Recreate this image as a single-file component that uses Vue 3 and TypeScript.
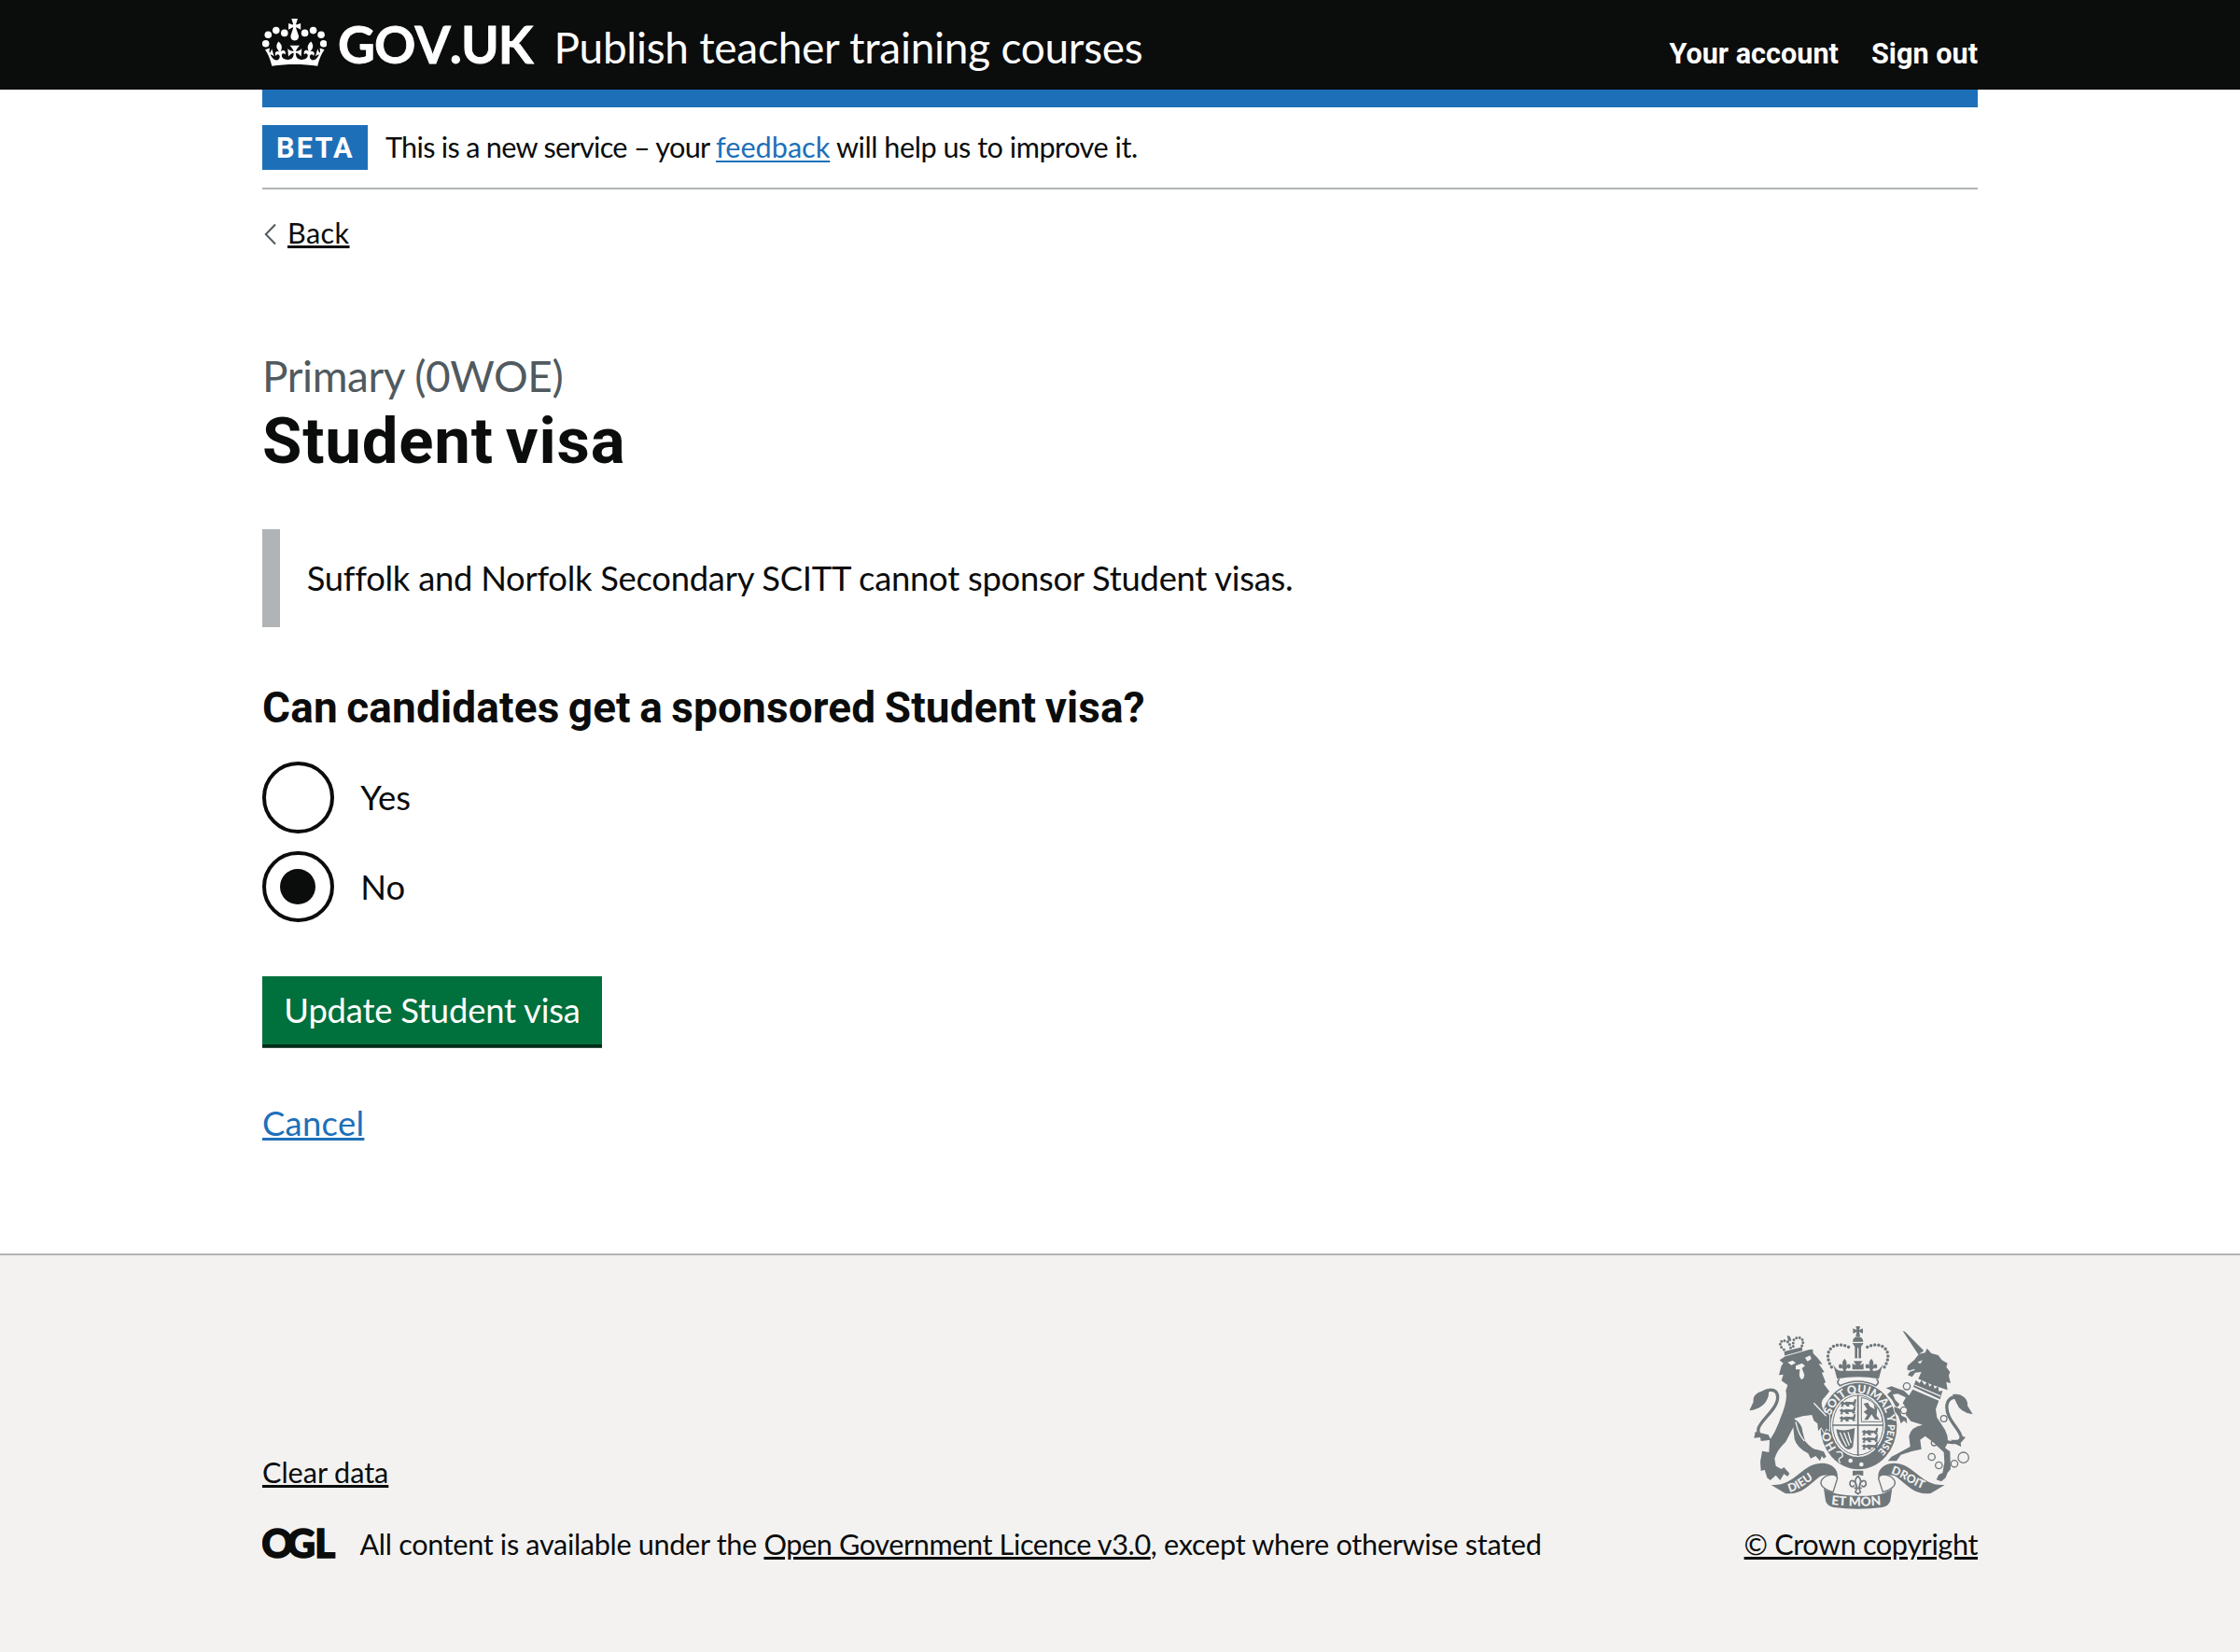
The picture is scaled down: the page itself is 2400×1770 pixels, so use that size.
<script setup lang="ts">
import { ref } from 'vue'

interface Option {
  value: string
  label: string
}

const options: Option[] = [
  { value: 'yes', label: 'Yes' },
  { value: 'no', label: 'No' },
]
const selected = ref('no')

const crownPearls: [number, number][] = [
  [3.7, 26.7], [6.3, 17.3], [14.8, 12.6], [23.8, 15.4],
  [45.6, 15.4], [54.6, 12.6], [63.1, 17.3], [65.7, 26.7],
]

const chainLinks: [number, number, number][] = [
  [549, 226, 11], [540, 303, 11], [668, 330, 10], [660, 373, 9], [637, 408, 9],
  [629, 453, 11], [652, 480, 11], [702, 475, 11], [731, 455, 17],
]

const lionRows: [number, number][] = [
  [332, 272], [330, 296], [330, 320], [402, 364], [402, 387], [402, 410],
]
</script>

<template>
  <div class="page">
    <header class="header">
      <div class="container header-row">
        <svg class="crown" viewBox="0 0 69.4 51" aria-hidden="true">
          <circle v-for="[cx, cy] in crownPearls" :key="cx" :cx="cx" :cy="cy" r="3.8" />
          <path d="M36.1 9.8c.2-.1.3-.3.5-.5l4.6 2.4v-6.8l-4.6 1.5c-.1-.2-.3-.3-.5-.5l1.9-5.9h-6.7l1.9 5.9c-.2.1-.3.3-.5.5l-4.6-1.5v6.8l4.6-2.4c.1.2.3.3.5.5l-2.6 8c-.9 2.8 1.2 5.7 4.1 5.7 3 0 5.1-2.9 4.1-5.7z" />
          <path transform="translate(3 -9.2)" d="M37 37.9s-3.4 3.8-4.1 6.1c2.2 0 4.2-.5 6.4-2.8l-.7 8.5c-2-2.8-4.4-4.1-5.7-3.8.1 3.1.5 6.7 5.8 7.2 3.7.3 6.7-1.5 7-3.8.4-2.6-2-4.3-3.7-1.6-1.4-4.5 2.4-6.1 4.9-3.2-1.9-4.5-1.8-7.7 2.4-10.9 3 4 2.6 7.3-1.2 11.1 2.4-1.3 6.2 0 4 4.6-1.2-2.8-3.7-2.2-4.2.2-.3 1.7.7 3.7 3 4.2 1.9.3 4.7-.9 7-5.9-1.3 0-2.4.7-3.9 1.7l2.4-8c.6 2.3 1.4 3.7 2.2 4.5.6-1.6.5-2.8 0-5.3l5 1.8c-2.6 3.6-5.2 8.7-7.3 17.5-7.4-1.1-15.7-1.7-24.5-1.7-8.8 0-17.1.6-24.5 1.7-2.1-8.9-4.7-13.9-7.3-17.5l5-1.8c-.5 2.5-.6 3.7 0 5.3.8-.8 1.6-2.3 2.2-4.5l2.4 8c-1.5-1-2.6-1.7-3.9-1.7 2.3 5 5.2 6.2 7 5.9 2.3-.4 3.3-2.4 3-4.2-.5-2.4-3-3.1-4.2-.2-2.2-4.6 1.6-6 4-4.6-3.7-3.7-4.2-7.1-1.2-11.1 4.2 3.2 4.3 6.4 2.4 10.9 2.5-2.8 6.3-1.3 4.9 3.2-1.8-2.7-4.1-1-3.7 1.6.3 2.3 3.3 4.1 7 3.8 5.4-.5 5.7-4.2 5.8-7.2-1.3-.2-3.7 1-5.7 3.8l-.7-8.5c2.2 2.3 4.2 2.7 6.4 2.8-.7-2.3-4.1-6.1-4.1-6.1z" />
        </svg>
        <span class="govuk">GOV.UK</span>
        <span class="service">Publish teacher training courses</span>
        <nav class="nav">
          <a>Your account</a>
          <a>Sign out</a>
        </nav>
      </div>
    </header>

    <main class="container main">
      <div class="bar"></div>
      <div class="phase">
        <strong class="tag">BETA</strong>
        <p class="phase-text"><span class="t1">This is a new service – your </span><a class="link feedback">feedback</a><span class="t2"> will help us to improve it.</span></p>
      </div>

      <a class="back">
        <svg class="chevron" viewBox="0 0 13 24" aria-hidden="true"><path d="M12 1.5 1.8 12 12 22.5" /></svg>
        <span>Back</span>
      </a>

      <h1 class="heading">
        <span class="caption">Primary (0WOE)</span>
        <span class="title">Student visa</span>
      </h1>

      <div class="inset">Suffolk and Norfolk Secondary SCITT cannot sponsor Student visas.</div>

      <h2 class="question">Can candidates get a sponsored Student visa?</h2>
      <div class="radios">
        <label v-for="o in options" :key="o.value" class="radio" @click="selected = o.value">
          <span class="circle"><span v-if="selected === o.value" class="dot"></span></span>
          <span class="radio-label">{{ o.label }}</span>
        </label>
      </div>

      <button class="button" type="button">Update Student visa</button>
      <a class="link cancel">Cancel</a>
    </main>

    <footer class="footer">
      <div class="container footer-row">
        <div class="meta">
          <a class="flink clear">Clear data</a>
          <div class="licence">
            <svg class="ogl" viewBox="0 0 80 38" role="img" aria-label="Open Government Licence">
              <text y="32.6" x="-0.8 26.6 56.3">OGL</text>
            </svg>
            <p class="licence-text"><span class="l1">All content is available under the </span><a class="flink l2">Open Government Licence v3.0</a><span class="l3">, except where otherwise stated</span></p>
          </div>
        </div>
        <div class="copyright">
          <svg class="crest" viewBox="42 30 720 592" aria-hidden="true">
            <defs>
              <path id="garter" d="M394 460C342 460 300 414 300 354S342 248 394 248S488 294 488 354S446 460 394 460" />
              <path id="dieu" d="M172 566C215 556 238 522 280 510" />
              <path id="mon" d="M306 606Q392 616 480 606" />
              <path id="droit" d="M497 506C540 518 565 548 622 562" />
              <g id="fleur">
                <path d="M0-22C9-12 9-6 4 4C10-6 20-6 20 4C20 12 12 14 9 8C8 12 6 14 4 14L6 24H-6L-4 14C-6 14-8 12-9 8C-12 14-20 12-20 4C-20-6-10-6-4 4C-9-6-9-12 0-22Z" />
              </g>
              <g id="passant">
                <path d="M2 8L10 2L16 6L22 3L44 5C50 0 46-4 52-5C58-3 52 2 54 8L50 12L56 16L46 18L42 12L30 13L34 19L24 19L20 13L12 14L14 20L4 20L8 13Z" />
              </g>
            </defs>

            <!-- royal crown -->
            <path d="M385 33H399L396 45L408 40V56L396 51L399 66H385L388 51L376 56V40L388 45Z" />
            <path d="M375 83Q376 67 392 67Q408 67 409 83Z" />
            <path d="M374 87H410L402 99V136H382V99Z" />
            <path class="light-line" d="M392 103V136" />
            <path class="beads" d="M307 164C295 145 289 120 306 103C322 88 350 90 372 106" />
            <path class="beads" d="M477 164C489 145 495 120 478 103C462 88 434 90 412 106" />
            <use href="#fleur" transform="translate(349 158) scale(.95)" />
            <use href="#fleur" transform="translate(435 158) scale(.95)" />
            <path d="M378 145H406L398 158L410 153V172H374V153L386 158Z" />
            <path d="M312 154Q322 178 340 176H444Q462 178 472 154L459 202Q392 190 325 202Z" />
            <path class="line" d="M333 203Q320 212 334 224Q392 196 450 224Q464 212 451 203" />

            <!-- garter and shield -->
            <ellipse cx="394" cy="354" rx="123" ry="139" />
            <ellipse class="light" cx="392" cy="351" rx="87" ry="102" />
            <ellipse class="line thin" cx="392" cy="351" rx="81" ry="96" />
            <path class="line" d="M392 254V450M310 351H474" />
            <use v-for="[x, y] in lionRows" :key="`${x}-${y}`" href="#passant" :x="x" :y="y" />
            <path class="line thin" d="M403 262Q440 268 458 300T468 340H403Z" />
            <path d="M410 282L424 278L430 290L446 300L442 282L454 296L452 320L462 334L446 332L436 316L424 334L412 334L422 318L410 308L422 300Z" />
            <path d="M322 364Q350 372 382 360L376 420Q366 436 350 424Q328 400 322 364Z" />
            <path class="light-line" d="M334 374Q344 398 356 420M347 375L364 416M360 373L370 408" />
            <circle class="light" cx="368" cy="465" r="7" />
            <circle class="light" cx="403" cy="477" r="7" />
            <path class="light-line" d="M322 438Q346 432 342 452Q322 462 336 472" />

            <!-- lion -->
            <path d="M155 114L212 100L214 112L156 128ZM164 62L174 66L178 80L168 80Z" />
            <path class="beads small" d="M154 108C136 96 138 76 162 80C170 84 174 94 176 104M212 96C222 76 208 64 190 72C182 78 184 90 184 100" />
            <path class="edged" d="M140 142L158 130L236 108L247 107L248 120L262 134L278 155L266 154L284 180L276 182L288 212L282 218L300 242L286 260Q268 275 280 300L300 318V368L290 362L284 376L274 358L264 370L262 346L250 336L244 318L214 322L186 330Q212 345 214 372L222 402Q245 430 262 430L282 436L290 452L282 458L276 450L270 466L256 450L240 458L232 442Q196 424 188 396L184 358L160 404Q132 430 124 458L128 482L146 492L154 486L172 506L166 516L154 508L142 528L128 512L110 528L100 520L92 494L80 498L78 468L84 434L106 438L108 400Q130 368 142 330Q168 270 160 240L166 222L146 208L152 188L138 190L146 160L152 152Z" />
            <path class="light" d="M166 149L182 143L192 151L178 158ZM222 134L238 127L242 138L230 146ZM192 160L212 152L222 160L212 168L220 190Q216 208 208 202Q200 192 206 172L192 172Z" />
            <path class="tail" d="M108 394Q66 390 72 362C78 335 132 302 134 262Q134 236 108 238Q90 240 78 252" />
            <path d="M106 240C76 238 52 252 56 276L43 304Q92 298 104 258ZM62 372L58 392L78 390L80 402L112 398L104 382Z" />
            <path class="light-line" d="M250 280L290 322M192 340Q200 380 220 402" />

            <!-- unicorn -->
            <path d="M536 48L543 50L604 112L586 124ZM588 122L608 118L614 104L628 120L650 126L662 142L680 152L676 164L688 180L684 192L690 216L676 212L680 238L662 232L626 220L586 202L596 180L576 182L566 196L552 190L560 178L550 172L552 160L574 140Z" />
            <path class="light" d="M584 148L600 142L592 154Z" />
            <path class="light-line" d="M556 178L574 172" />
            <path d="M578 206L590 216L596 206L606 222L616 210L622 228L634 216L638 234L650 226L652 242L664 240L656 268L570 228Z" />
            <path class="light-line" d="M574 222L658 258" />
            <path class="edged" d="M568 236L652 272L642 300L646 326L672 366Q690 402 672 424L688 436L690 492L680 504L674 520L660 532L644 526L652 510L664 504L670 470L668 438L632 404L608 386L592 398L596 428Q560 434 530 446L516 466H488L500 452L516 444L560 420L556 386Q562 356 600 350L562 338L546 318L550 300L536 280L546 262L520 250L504 252L512 270L526 284L516 296L502 270L486 252L500 240L482 232L500 226L540 240L556 256Z" />
            <path class="edged" d="M508 292L526 298L532 320L548 328L550 346L540 336L530 346L522 322L510 306Z" />
            <path class="tail" d="M676 404Q716 414 724 392C724 366 672 332 678 286Q684 256 714 262" />
            <path d="M696 252C724 246 748 266 744 288L761 316Q720 310 708 278ZM738 390L722 384L716 398L690 398L706 412L724 420L722 408Z" />
            <g class="links">
              <circle v-for="[cx, cy, r] in chainLinks" :key="`${cx}-${cy}`" :cx="cx" :cy="cy" :r="r" />
            </g>
            <g class="motto">
              <text><textPath href="#garter" startOffset="13%">HO</textPath></text>
              <text><textPath href="#garter" startOffset="30.5%">SOIT</textPath></text>
              <text><textPath href="#garter" startOffset="44.5%">QUI</textPath></text>
              <text><textPath href="#garter" startOffset="55.5%">MAL</textPath></text>
              <text><textPath href="#garter" startOffset="69.4%">Y</textPath></text>
              <text class="pense"><textPath href="#garter" startOffset="74%">PENSE</textPath></text>
            </g>

            <!-- ribbon -->
            <path d="M113 543C190 548 206 480 268 474C306 470 332 494 326 522L310 548L296 532C316 508 278 506 262 522C230 548 208 576 158 570Z" />
            <path d="M671 543C594 548 578 480 516 474C478 470 452 494 458 522L474 548L488 532C468 508 506 506 522 522C554 548 576 576 626 570Z" />
            <path class="ribbon-fold" d="M274 530C268 545 290 562 312 566L326 522C320 502 284 510 274 530Z" />
            <path class="ribbon-fold" d="M510 530C516 545 494 562 472 566L458 522C464 502 500 510 510 530Z" />
            <path d="M282 554Q310 576 392 578T502 554L496 594Q492 610 470 615Q392 625 314 615Q292 610 288 594Z" />
            <g class="motto scroll">
              <text><textPath href="#dieu">DIEU</textPath></text>
              <text class="mon"><textPath href="#mon">ET MON</textPath></text>
              <text><textPath href="#droit">DROIT</textPath></text>
            </g>
            <path d="M375 497H409V514L392 510L375 514Z" />
            <path class="line" d="M392 514C404 526 402 536 396 550C398 528 418 522 418 540C416 552 406 550 404 544M392 514C380 526 382 536 388 550C386 528 366 522 366 540C368 552 378 550 380 544M380 553H404M388 556L384 566L392 572L400 566L396 556" />
          </svg>
          <a class="flink crown-copy">© Crown copyright</a>
        </div>
      </div>
    </footer>
  </div>
</template>

<style>
body {
  margin: 0;
  background: #fff;
}
</style>

<style scoped>
.page {
  width: 2400px;
  height: 1770px;
  display: flex;
  flex-direction: column;
  font-family: Lato, 'Noto Sans', sans-serif;
  font-size: 30.63px;
  color: #0b0c0c;
  font-variant-ligatures: none;
}
.container {
  width: 1838px;
  margin: 0 auto;
}
p, h1, h2 {
  margin: 0;
  font-weight: 400;
}
.header {
  background: #0b0c0c;
  height: 96px;
  flex: none;
  color: #fff;
}
.header-row {
  display: flex;
  align-items: baseline;
}
.crown {
  width: 69.4px;
  height: 51px;
  align-self: flex-start;
  margin-top: 20px;
  fill: #fff;
}
.govuk {
  font-size: 55px;
  font-weight: 700;
  font-kerning: none;
  line-height: 94px;
  margin-left: 11.5px;
  width: 231.5px;
  letter-spacing: -0.9px;
  -webkit-text-stroke: 0.8px #fff;
}
.service {
  font-size: 45.95px;
  line-height: 60px;
  letter-spacing: -0.25px;
}
.nav {
  margin-left: auto;
  display: flex;
  gap: 35px;
  font-family: Roboto, sans-serif;
  font-weight: 700;
  line-height: 40px;
}
.main {
  flex: none;
  height: 1247px;
  display: flex;
  flex-direction: column;
  align-items: flex-start;
}
.bar {
  width: 100%;
  height: 19px;
  background: #1d70b8;
}
.phase {
  width: 100%;
  box-sizing: border-box;
  height: 88px;
  padding-top: 19px;
  border-bottom: 2px solid #b1b4b6;
  display: flex;
}
.tag {
  width: 113px;
  height: 48px;
  box-sizing: border-box;
  padding-left: 15px;
  background: #1d70b8;
  color: #fff;
  font-family: Roboto, sans-serif;
  font-weight: 700;
  line-height: 50px;
  letter-spacing: 2.2px;
}
.phase-text {
  margin-left: 19px;
  line-height: 48.3px;
  white-space: pre;
}
.t1 { letter-spacing: -0.7px; }
.t2 { letter-spacing: -0.48px; }
.link {
  color: #1d70b8;
  text-decoration: underline;
  text-decoration-thickness: 2px;
  text-underline-offset: 3px;
}
.back {
  display: flex;
  align-items: center;
  height: 40px;
  margin-top: 26px;
  line-height: 42px;
  letter-spacing: 0.4px;
}
.back span {
  text-decoration: underline;
  text-decoration-thickness: 3px;
  text-underline-offset: 2px;
  margin-top: 2px;
}
.chevron {
  width: 13px;
  height: 24px;
  margin: 4px 12px 0 2px;
  fill: none;
  stroke: #505a5f;
  stroke-width: 2;
}
.heading {
  margin-top: 104.7px;
  display: flex;
  flex-direction: column;
}
.caption {
  font-size: 45.95px;
  line-height: 57px;
  color: #505a5f;
  letter-spacing: -0.42px;
}
.title {
  font-family: Roboto, sans-serif;
  font-weight: 700;
  font-size: 68.9px;
  line-height: 76px;
  margin-top: 4.3px;
  letter-spacing: 0.8px;
  word-spacing: -5px;
}
.inset {
  margin-top: 56px;
  box-sizing: border-box;
  height: 105px;
  padding: 28px 0 0 28.7px;
  border-left: 19px solid #b1b4b6;
  font-size: 36.4px;
  line-height: 48px;
  letter-spacing: -0.27px;
}
.question {
  margin-top: 58.5px;
  font-family: Roboto, sans-serif;
  font-weight: 700;
  font-size: 45.95px;
  line-height: 57px;
  letter-spacing: 0.15px;
  word-spacing: -2.2px;
}
.radios {
  margin-top: 28.5px;
  display: flex;
  flex-direction: column;
  gap: 19.2px;
}
.radio {
  display: flex;
  height: 76.6px;
}
.circle {
  width: 76.6px;
  height: 76.6px;
  box-sizing: border-box;
  border: 4px solid #0b0c0c;
  border-radius: 50%;
  display: flex;
  align-items: center;
  justify-content: center;
}
.dot {
  width: 38.3px;
  height: 38.3px;
  border-radius: 50%;
  background: #0b0c0c;
}
.radio-label {
  margin-left: 28.7px;
  font-size: 36.4px;
  line-height: 77px;
}
.button {
  margin: 57.6px 0 0;
  border: 0;
  width: 364px;
  height: 73px;
  padding: 0;
  background: #00703c;
  box-shadow: 0 3.8px 0 #002d18;
  color: #fff;
  font: 400 36.4px/72px Lato, sans-serif;
  letter-spacing: -0.2px;
}
.cancel {
  margin-top: 59.6px;
  font-size: 36.4px;
  line-height: 48px;
  letter-spacing: 0.3px;
  text-decoration-thickness: 3px;
  text-underline-offset: 2px;
}
.footer {
  flex: 1;
  background: #f3f2f1;
  border-top: 2px solid #b1b4b6;
}
.footer-row {
  display: flex;
  justify-content: space-between;
  padding-top: 75px;
}
.meta {
  padding-top: 139.3px;
  line-height: 38px;
}
.flink {
  text-decoration: underline;
  text-decoration-thickness: 3px;
  text-underline-offset: 2px;
}
.clear { letter-spacing: -0.05px; }
.licence {
  display: flex;
  margin-top: 38.8px;
}
.ogl {
  width: 80px;
  height: 38px;
  margin-right: 24.5px;
}
.ogl text {
  font: 900 42px Lato, sans-serif;
  fill: #0b0c0c;
  stroke: #0b0c0c;
  stroke-width: 1.6;
}
.licence-text { white-space: pre; }
.l1 { letter-spacing: -0.33px; }
.l2 { letter-spacing: -0.39px; }
.l3 { letter-spacing: -0.28px; }
.copyright {
  display: flex;
  flex-direction: column;
  align-items: flex-end;
  line-height: 38px;
}
.crown-copy {
  margin-top: 18.8px;
  letter-spacing: -0.38px;
}
.crest {
  width: 240px;
  height: 197.3px;
  margin-right: 5px;
  fill: #6f777b;
}
.crest .light { fill: #f3f2f1; }
.crest .light-line {
  fill: none;
  stroke: #f3f2f1;
  stroke-width: 4;
}
.crest .line {
  fill: none;
  stroke: #6f777b;
  stroke-width: 5;
}
.crest .thin { stroke-width: 3; }
.crest .edged {
  stroke: #f3f2f1;
  stroke-width: 5;
  paint-order: stroke;
}
.crest .beads {
  fill: none;
  stroke: #6f777b;
  stroke-width: 10.5;
  stroke-linecap: round;
  stroke-dasharray: 0 12.5;
}
.crest .beads.small {
  stroke-width: 9;
  stroke-dasharray: 0 10.5;
}
.crest .tail {
  fill: none;
  stroke: #6f777b;
  stroke-width: 10;
}
.crest .links {
  fill: none;
  stroke: #6f777b;
  stroke-width: 4;
}
.crest .ribbon-fold {
  fill: #f3f2f1;
  stroke: #6f777b;
  stroke-width: 4;
}
.motto text {
  font: 900 37px Lato, sans-serif;
  fill: #f3f2f1;
}
.motto .pense { font-size: 31px; }
.scroll .mon { font-size: 41px; }
</style>
